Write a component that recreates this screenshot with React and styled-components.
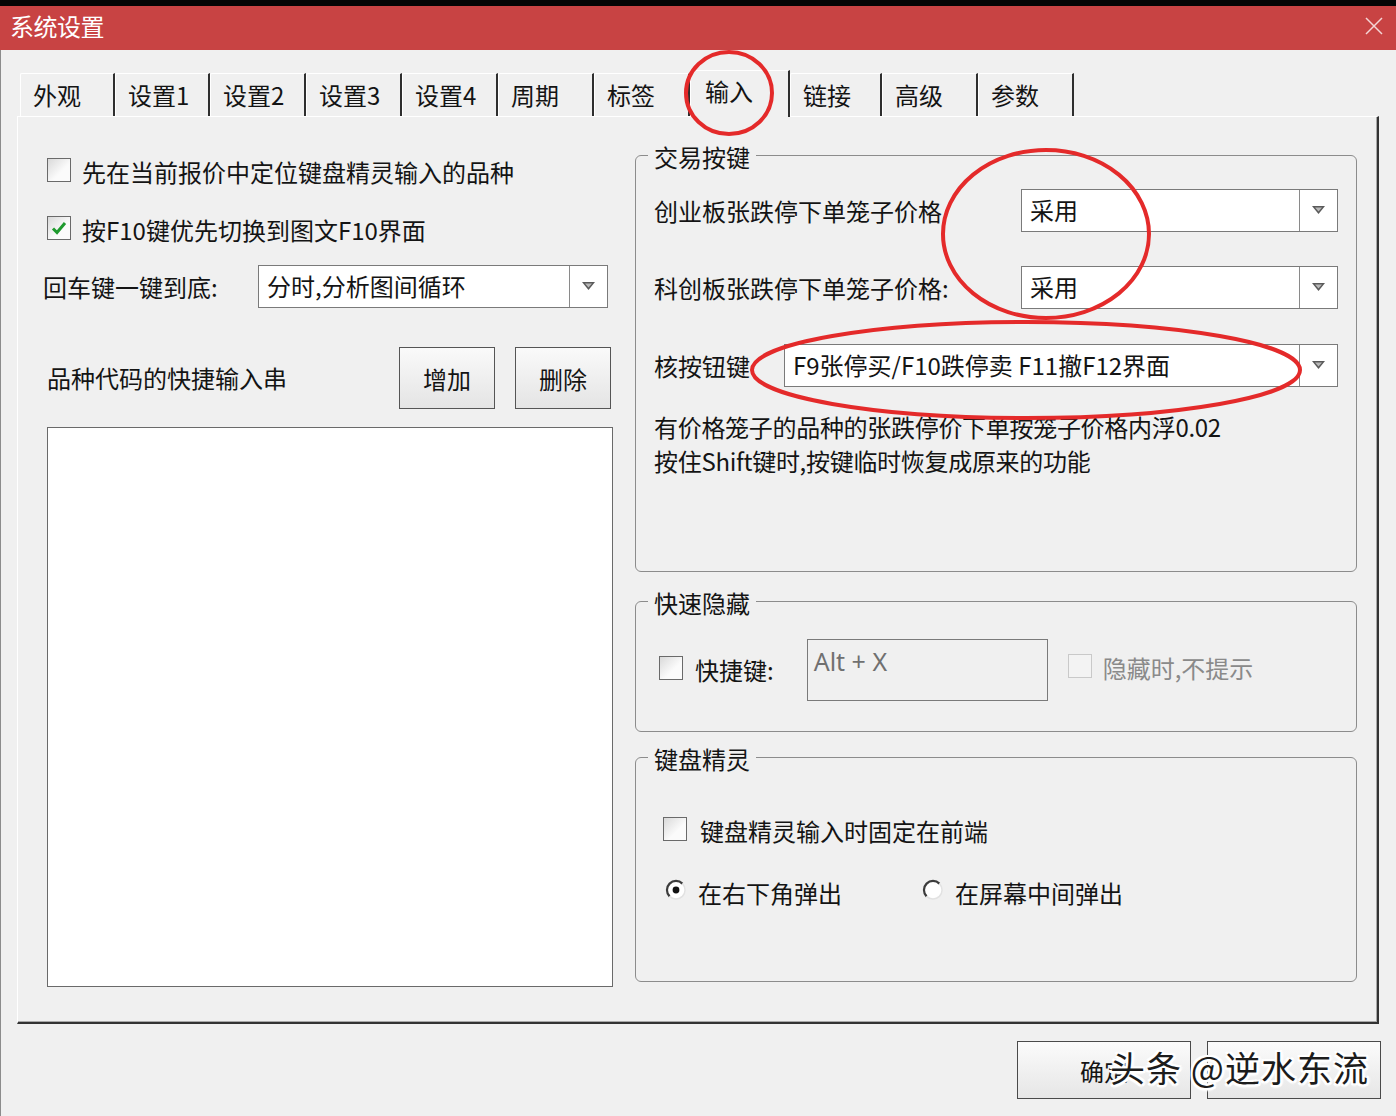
import styled, { createGlobalStyle } from "styled-components";

const GlobalStyle = createGlobalStyle`
  html, body {
    margin: 0;
    padding: 0;
    background: #f0f0f0;
  }
  body {
    font-family: "Noto Sans CJK SC", "Noto Sans", sans-serif;
  }
`;

const tabs = [
  { label: "外观", width: 95 },
  { label: "设置1", width: 95 },
  { label: "设置2", width: 96 },
  { label: "设置3", width: 96 },
  { label: "设置4", width: 96 },
  { label: "周期", width: 96 },
  { label: "标签", width: 96 },
  { label: "输入", width: 100, active: true },
  { label: "链接", width: 92 },
  { label: "高级", width: 96 },
  { label: "参数", width: 96 },
];

function Arrow() {
  return (
    <svg width="13" height="8" viewBox="0 0 13 8">
      <polygon points="0,0 13,0 6.5,8" fill="#5a5a5a" />
      <polygon points="3,1.5 10,1.5 6.5,5.5" fill="#b8b8b8" />
    </svg>
  );
}

function Checkbox({ checked, disabled }) {
  return (
    <Box $disabled={disabled}>
      {checked && (
        <svg width="18" height="18" viewBox="0 0 18 18">
          <path
            d="M3 9.5 L7 13.5 L15 4"
            stroke="#1f9a2e"
            strokeWidth="3"
            fill="none"
          />
        </svg>
      )}
    </Box>
  );
}

function Radio({ checked }) {
  return (
    <svg width="22" height="22" viewBox="0 0 22 22">
      <circle cx="11" cy="11" r="9" fill="#fff" />
      <path
        d="M4.6 17.4 A9 9 0 0 1 17.4 4.6"
        stroke="#3c3c3c"
        strokeWidth="2.2"
        fill="none"
      />
      <path
        d="M17.4 4.6 A9 9 0 0 1 4.6 17.4"
        stroke="#e2e2e2"
        strokeWidth="1.5"
        fill="none"
      />
      {checked && <circle cx="11" cy="11" r="3.4" fill="#111" />}
    </svg>
  );
}

function Select({ value, width }) {
  return (
    <Combo $width={width}>
      <ComboText>{value}</ComboText>
      <ComboButton>
        <Arrow />
      </ComboButton>
    </Combo>
  );
}

export default function App() {
  return (
    <Window>
      <GlobalStyle />
      <TopStrip />
      <TitleBar>
        <span>系统设置</span>
        <svg width="20" height="20" viewBox="0 0 20 20">
          <path d="M2 2 L18 18 M18 2 L2 18" stroke="#f4d6d6" strokeWidth="1.5" />
        </svg>
      </TitleBar>

      <Body>
        <TabRow>
          {tabs.map((t) => (
            <Tab key={t.label} $width={t.width} $active={t.active}>
              {t.label}
            </Tab>
          ))}
        </TabRow>

        <Panel>
          <LeftCol>
            <CheckRow>
              <Checkbox />
              <Label>先在当前报价中定位键盘精灵输入的品种</Label>
            </CheckRow>
            <CheckRow $mt={26}>
              <Checkbox checked />
              <Label>按F10键优先切换到图文F10界面</Label>
            </CheckRow>
            <FieldRow>
              <Label>回车键一键到底:</Label>
              <Select value="分时,分析图间循环" width={350} />
            </FieldRow>
            <ButtonRow>
              <Label>品种代码的快捷输入串</Label>
              <Button>增加</Button>
              <Button>删除</Button>
            </ButtonRow>
            <ListBox />
          </LeftCol>

          <RightCol>
            <Group $height={431}>
              <Legend>交易按键</Legend>
              <TradeRow $mt={20}>
                <Label>创业板张跌停下单笼子价格</Label>
                <Select value="采用" width={317} />
              </TradeRow>
              <TradeRow $mt={34}>
                <Label>科创板张跌停下单笼子价格:</Label>
                <Select value="采用" width={317} />
              </TradeRow>
              <TradeRow $mt={35}>
                <Label>核按钮键</Label>
                <Select value="F9张停买/F10跌停卖 F11撤F12界面" width={554} />
              </TradeRow>
              <Note>
                有价格笼子的品种的张跌停价下单按笼子价格内浮0.02
                <br />
                按住Shift键时,按键临时恢复成原来的功能
              </Note>
            </Group>

            <Group $height={145} $mt={15}>
              <Legend>快速隐藏</Legend>
              <HideRow>
                <CheckRow $ml={5} $gap={12}>
                  <Checkbox />
                  <Label>快捷键:</Label>
                </CheckRow>
                <HotkeyBox>Alt + X</HotkeyBox>
                <CheckRow $gap={11} $up={4}>
                  <Checkbox disabled />
                  <Label $muted>隐藏时,不提示</Label>
                </CheckRow>
              </HideRow>
            </Group>

            <Group $height={239} $mt={11}>
              <Legend>键盘精灵</Legend>
              <CheckRow $mt={44} $ml={9} $gap={13}>
                <Checkbox $small />
                <Label>键盘精灵输入时固定在前端</Label>
              </CheckRow>
              <RadioRow>
                <RadioItem>
                  <Radio checked />
                  <Label>在右下角弹出</Label>
                </RadioItem>
                <RadioItem>
                  <Radio />
                  <Label>在屏幕中间弹出</Label>
                </RadioItem>
              </RadioRow>
            </Group>
          </RightCol>
        </Panel>

        <Footer>
          <DialogButton>确定</DialogButton>
          <DialogButton />
        </Footer>
      </Body>

      <Marks viewBox="0 0 1396 1116">
        <ellipse cx="729" cy="93" rx="43" ry="41" />
        <ellipse cx="1046" cy="234" rx="103" ry="84" />
        <ellipse cx="1026" cy="370" rx="274" ry="48" />
      </Marks>
      <Watermark>头条 @逆水东流</Watermark>
    </Window>
  );
}

const Window = styled.div`
  position: relative;
  width: 1396px;
  height: 1116px;
  overflow: hidden;
  display: flex;
  flex-direction: column;
  background: #f0f0f0;
  color: #141414;
  font-family: "Noto Sans CJK SC", "Noto Sans", sans-serif;
  font-size: 24px;
`;

const TopStrip = styled.div`
  height: 6px;
  background: #050505;
  flex: none;
`;

const TitleBar = styled.div`
  box-sizing: border-box;
  height: 44px;
  flex: none;
  display: flex;
  align-items: center;
  justify-content: space-between;
  padding: 0 12px 5px 10px;
  background: #c84343;
  color: #fff;
  font-size: 24px;
  letter-spacing: -0.5px;
`;

const Body = styled.div`
  flex: 1;
  display: flex;
  flex-direction: column;
  padding: 20px 0 0 16px;
  border-left: 1px solid #8c8c8c;
`;

const TabRow = styled.div`
  height: 46px;
  display: flex;
  align-items: flex-end;
  padding-left: 3px;
  position: relative;
  z-index: 1;
`;

const Tab = styled.div`
  box-sizing: border-box;
  width: ${(p) => p.$width}px;
  height: ${(p) => (p.$active ? 47 : 43)}px;
  margin-bottom: ${(p) => (p.$active ? -1 : 0)}px;
  padding-left: ${(p) => (p.$active ? 14 : 12)}px;
  line-height: ${(p) => (p.$active ? 40 : 41)}px;
  background: #f0f0f0;
  border-top: 1px solid #fff;
  border-left: 1px solid #fff;
  border-right: 2px solid #2e2e2e;
  border-top-left-radius: 2px;
  font-size: 24px;
  white-space: nowrap;
`;

const Panel = styled.div`
  box-sizing: border-box;
  width: 1362px;
  height: 908px;
  display: flex;
  gap: 22px;
  padding: 24px 0 0 29px;
  border-top: 1px solid #fff;
  border-left: 1px solid #fff;
  border-right: 2px solid #333;
  border-bottom: 2px solid #333;
  box-shadow: inset -1px -1px 0 #a8a8a8;
`;

const LeftCol = styled.div`
  width: 566px;
  display: flex;
  flex-direction: column;
  padding-top: 15px;
`;

const RightCol = styled.div`
  width: 722px;
  display: flex;
  flex-direction: column;
`;

const CheckRow = styled.div`
  height: 32px;
  display: flex;
  align-items: center;
  gap: ${(p) => p.$gap ?? 11}px;
  margin-top: ${(p) => p.$mt ?? 0}px;
  margin-left: ${(p) => p.$ml ?? 0}px;
  margin-bottom: ${(p) => p.$up ?? 0}px;
`;

const Box = styled.div`
  box-sizing: border-box;
  width: 24px;
  height: 24px;
  flex: none;
  display: flex;
  align-items: center;
  justify-content: center;
  border: 1px solid ${(p) => (p.$disabled ? "#c9c9c9" : "#6a6a6a")};
  background: ${(p) =>
    p.$disabled ? "#f3f3f3" : "linear-gradient(135deg, #d9d9d9, #fbfbfb 60%)"};
  margin-top: -4px;
`;

const Label = styled.span`
  font-size: 24px;
  line-height: 32px;
  white-space: nowrap;
  color: ${(p) => (p.$muted ? "#8a8a8a" : "#141414")};
`;

const FieldRow = styled.div`
  display: grid;
  grid-template-columns: 215px 350px;
  align-items: center;
  margin: 19px 0 0 -4px;
`;

const Combo = styled.div`
  box-sizing: border-box;
  width: ${(p) => p.$width}px;
  height: 43px;
  flex: none;
  display: flex;
  background: #fff;
  border: 1px solid #7a7a7a;
`;

const ComboText = styled.div`
  flex: 1;
  padding-left: 8px;
  line-height: 40px;
  font-size: 24px;
  white-space: nowrap;
  overflow: hidden;
`;

const ComboButton = styled.div`
  width: 37px;
  flex: none;
  display: flex;
  align-items: center;
  justify-content: center;
  border-left: 1px solid #8a8a8a;
  padding-bottom: 2px;
`;

const ButtonRow = styled.div`
  display: grid;
  grid-template-columns: 1fr 96px 96px;
  column-gap: 20px;
  align-items: center;
  margin-top: 39px;
  padding-right: 2px;
`;

const Button = styled.div`
  box-sizing: border-box;
  height: 62px;
  display: flex;
  align-items: center;
  justify-content: center;
  border: 1px solid #555;
  background: linear-gradient(#fafafa, #e4e4e4);
  font-size: 24px;
`;

const ListBox = styled.div`
  box-sizing: border-box;
  height: 560px;
  margin-top: 18px;
  background: #fff;
  border: 1px solid #6a6a6a;
`;

const Group = styled.fieldset`
  box-sizing: border-box;
  height: ${(p) => p.$height}px;
  margin: ${(p) => p.$mt ?? 0}px 0 0 0;
  padding: 0 18px;
  border: 1px solid #8c8c8c;
  border-radius: 6px;
  min-width: 0;
`;

const Legend = styled.legend`
  margin-left: -6px;
  padding: 0 6px;
  font-size: 24px;
  line-height: 28px;
  transform: translateY(2px);
`;

const TradeRow = styled.div`
  display: flex;
  align-items: center;
  justify-content: space-between;
  margin-top: ${(p) => p.$mt}px;
`;

const Note = styled.div`
  margin-top: 23px;
  font-size: 24px;
  line-height: 34px;
  white-space: nowrap;
  letter-spacing: -0.3px;
`;

const HideRow = styled.div`
  display: flex;
  align-items: center;
  margin-top: 24px;
  gap: 20px;

  & > :nth-child(1) {
    margin-right: 13px;
  }
`;

const HotkeyBox = styled.div`
  box-sizing: border-box;
  width: 241px;
  height: 62px;
  padding: 4px 6px;
  border: 1px solid #7a7a7a;
  background: #f0f0f0;
  color: #707070;
  font-family: "Noto Sans", sans-serif;
  font-size: 25px;
  line-height: 34px;
`;

const RadioRow = styled.div`
  display: flex;
  align-items: center;
  gap: 80px;
  margin: 30px 0 0 11px;
`;

const RadioItem = styled.div`
  display: flex;
  align-items: center;
  gap: 11px;
  height: 32px;

  & > svg {
    margin-top: -6px;
  }
`;

const Footer = styled.div`
  display: flex;
  justify-content: flex-end;
  gap: 16px;
  margin-top: 17px;
  padding-right: 15px;
`;

const DialogButton = styled.div`
  box-sizing: border-box;
  width: 174px;
  height: 58px;
  display: flex;
  align-items: center;
  justify-content: center;
  border: 1px solid #4a4a4a;
  background: linear-gradient(#fbfbfb, #e6e6e6);
  font-size: 24px;
`;

const Marks = styled.svg`
  position: absolute;
  inset: 0;
  z-index: 2;
  width: 1396px;
  height: 1116px;
  pointer-events: none;

  ellipse {
    fill: none;
    stroke: #e42a2a;
    stroke-width: 4;
  }
`;

const Watermark = styled.div`
  position: absolute;
  z-index: 3;
  left: 1110px;
  top: 1045px;
  font-size: 35px;
  line-height: 44px;
  letter-spacing: 1px;
  color: #1c1c1c;
  white-space: nowrap;
  text-shadow: 0 0 2px #fff, 0 0 3px #fff, 2px 2px 0 #fff, -2px -2px 0 #fff,
    2px -2px 0 #fff, -2px 2px 0 #fff, 0 3px 2px #fff, 3px 0 2px #fff;
`;
